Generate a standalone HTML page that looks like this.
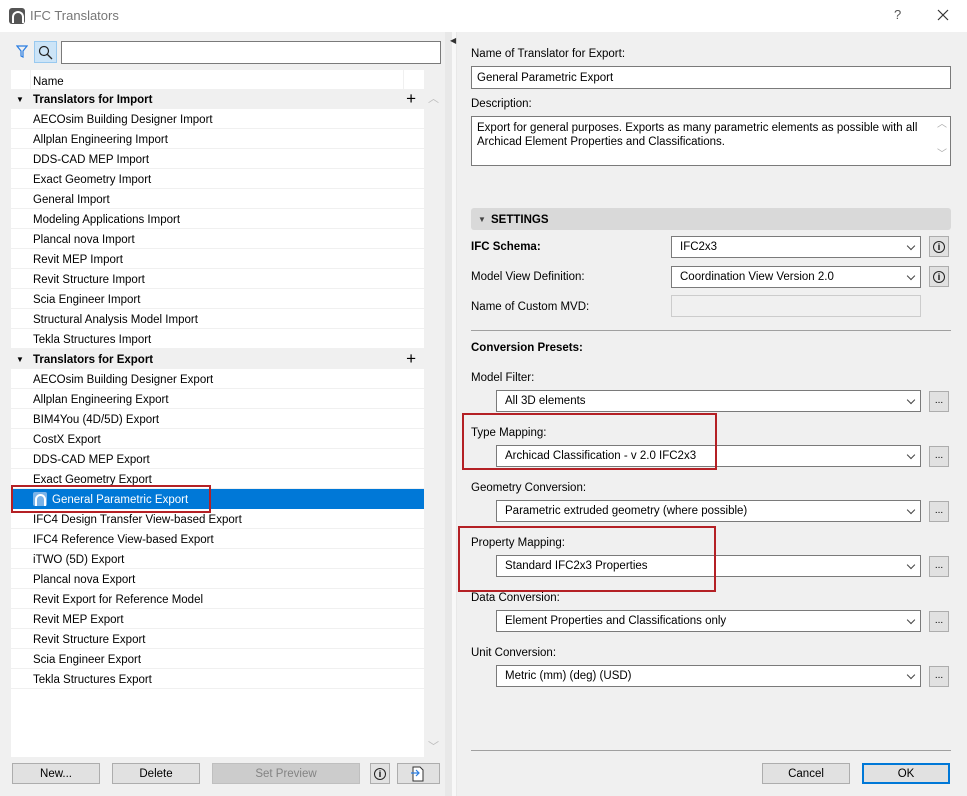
<!DOCTYPE html>
<html><head><meta charset="utf-8"><style>
*{box-sizing:border-box;margin:0;padding:0}
body{width:967px;height:796px;background:#f0f0f0;font-family:"Liberation Sans",sans-serif;font-size:11.5px;color:#000;position:relative;overflow:hidden}
.a{position:absolute}
.t{position:absolute;white-space:nowrap;line-height:14px}
.b{font-weight:bold}
.inp{position:absolute;background:#fff;border:1px solid #7a7a7a}
.sel{position:absolute;background:#fff;border:1px solid #7a7a7a;padding-left:8px;line-height:21px}
.sel:after{content:"";position:absolute;right:6px;top:6px;width:5px;height:5px;border-right:1px solid #444;border-bottom:1px solid #444;transform:rotate(45deg)}
.btn{position:absolute;background:#e1e1e1;border:1px solid #adadad;text-align:center;line-height:21px}
.dots{position:absolute;width:20px;height:21px;background:#e1e1e1;border:1px solid #adadad;text-align:center;line-height:18px;font-size:10px}
.info{position:absolute;width:20px;height:21px;background:#e1e1e1;border:1px solid #adadad}
.info i{position:absolute;left:3px;top:4px;width:12px;height:12px;border:1.3px solid #222;border-radius:50%;font-style:normal;font-size:9px;line-height:10px;text-align:center;font-weight:bold}
.row{position:absolute;left:11px;width:413px;height:20px;border-bottom:1px solid #f0f0f0;padding-left:22px;line-height:22px;background:#fff}
.grp{background:#f0f0f0;font-weight:bold}
.red{position:absolute;border:2px solid #b42025}
</style></head><body>
<div class="a" style="left:0;top:0;width:967px;height:32px;background:#fff"></div>
<div class="a" style="left:9px;top:8px;width:16px;height:16px;background:#555;border-radius:3px"></div>
<div class="a" style="left:12px;top:11px;width:12px;height:12px;border:2px solid #fff;border-radius:10px 10px 0 0;border-bottom:none"></div>
<div class="t" style="left:30px;top:9px;font-size:13px;color:#777">IFC Translators</div>
<div class="t" style="left:894px;top:8px;font-size:13px;color:#555">?</div>
<svg class="a" style="left:937px;top:9px" width="12" height="12"><path d="M1 1L11 11M11 1L1 11" stroke="#333" stroke-width="1.2"/></svg>

<!-- left -->
<svg class="a" style="left:16px;top:45px" width="12" height="13"><path d="M1 1H11L7 6V12L5 11V6Z" fill="none" stroke="#2a7de1" stroke-width="1.2"/></svg>
<div class="a" style="left:34px;top:41px;width:23px;height:22px;background:#cce4f7;border:1px solid #99c9ef"></div>
<svg class="a" style="left:38px;top:45px" width="15" height="15"><circle cx="6" cy="6" r="4.5" fill="none" stroke="#222" stroke-width="1.2"/><path d="M9.5 9.5L14 14" stroke="#222" stroke-width="1.3"/></svg>
<div class="inp" style="left:61px;top:41px;width:380px;height:23px"></div>
<div class="a" style="left:11px;top:70px;width:413px;height:687px;background:#fff"></div>
<div class="t" style="left:33px;top:75px">Name</div>
<div class="a" style="left:30px;top:70px;width:1px;height:19px;background:#f0f0f0"></div>
<div class="a" style="left:403px;top:70px;width:1px;height:19px;background:#f0f0f0"></div>
<div class="t" style="left:428px;top:92px;color:#bbb;font-size:11px">︿</div>
<div class="t" style="left:428px;top:740px;color:#bbb;font-size:11px">﹀</div>

<div class="row grp" style="top:89px">Translators for Import<span style="position:absolute;left:5px;top:0;font-size:8px">▼</span><span style="position:absolute;right:8px;top:-1px;font-size:17px;font-weight:normal">+</span></div>
<div class="row" style="top:109px">AECOsim Building Designer Import</div>
<div class="row" style="top:129px">Allplan Engineering Import</div>
<div class="row" style="top:149px">DDS-CAD MEP Import</div>
<div class="row" style="top:169px">Exact Geometry Import</div>
<div class="row" style="top:189px">General Import</div>
<div class="row" style="top:209px">Modeling Applications Import</div>
<div class="row" style="top:229px">Plancal nova Import</div>
<div class="row" style="top:249px">Revit MEP Import</div>
<div class="row" style="top:269px">Revit Structure Import</div>
<div class="row" style="top:289px">Scia Engineer Import</div>
<div class="row" style="top:309px">Structural Analysis Model Import</div>
<div class="row" style="top:329px">Tekla Structures Import</div>
<div class="row grp" style="top:349px">Translators for Export<span style="position:absolute;left:5px;top:0;font-size:8px">▼</span><span style="position:absolute;right:8px;top:-1px;font-size:17px;font-weight:normal">+</span></div>
<div class="row" style="top:369px">AECOsim Building Designer Export</div>
<div class="row" style="top:389px">Allplan Engineering Export</div>
<div class="row" style="top:409px">BIM4You (4D/5D) Export</div>
<div class="row" style="top:429px">CostX Export</div>
<div class="row" style="top:449px">DDS-CAD MEP Export</div>
<div class="row" style="top:469px">Exact Geometry Export</div>
<div class="row" style="top:489px;background:#0078d7;color:#fff;padding-left:41px;border-bottom-color:#0078d7">General Parametric Export</div>
<div class="a" style="left:33px;top:492px;width:14px;height:14px;background:#7ab3e8;border-radius:2px"></div>
<div class="a" style="left:35px;top:494px;width:11px;height:12px;border:2px solid #fff;border-bottom:none;border-radius:9px 9px 0 0"></div>
<div class="row" style="top:509px">IFC4 Design Transfer View-based Export</div>
<div class="row" style="top:529px">IFC4 Reference View-based Export</div>
<div class="row" style="top:549px">iTWO (5D) Export</div>
<div class="row" style="top:569px">Plancal nova Export</div>
<div class="row" style="top:589px">Revit Export for Reference Model</div>
<div class="row" style="top:609px">Revit MEP Export</div>
<div class="row" style="top:629px">Revit Structure Export</div>
<div class="row" style="top:649px">Scia Engineer Export</div>
<div class="row" style="top:669px">Tekla Structures Export</div>
<div class="red" style="left:11px;top:485px;width:200px;height:28px"></div>

<div class="btn" style="left:12px;top:763px;width:88px;height:21px">New...</div>
<div class="btn" style="left:112px;top:763px;width:88px;height:21px">Delete</div>
<div class="btn" style="left:212px;top:763px;width:148px;height:21px;background:#ccc;border-color:#bfbfbf;color:#838383">Set Preview</div>
<div class="info" style="left:370px;top:763px"><i>i</i></div>
<div class="btn" style="left:397px;top:763px;width:43px;height:21px"></div>
<svg class="a" style="left:410px;top:765px" width="16" height="18"><path d="M3 2H10L13 5V16H3Z" fill="#fff" stroke="#333"/><path d="M1 8H9M6 5L9 8L6 11" fill="none" stroke="#2a7de1" stroke-width="1.2"/></svg>

<!-- divider -->
<div class="a" style="left:445px;top:32px;width:12px;height:764px;background:#e8e8e8"></div>
<div class="a" style="left:452px;top:32px;width:4px;height:764px;background:#f8f8f8"></div>
<div class="t" style="left:450px;top:34px;font-size:8px;color:#333">◀</div>

<!-- right -->
<div class="t" style="left:471px;top:47px">Name of Translator for Export:</div>
<div class="inp" style="left:471px;top:66px;width:480px;height:23px;padding:5px 5px;line-height:13px">General Parametric Export</div>
<div class="t" style="left:471px;top:97px">Description:</div>
<div class="inp" style="left:471px;top:116px;width:480px;height:50px;padding:4px 5px;line-height:14px">Export for general purposes. Exports as many parametric elements as possible with all<br>Archicad Element Properties and Classifications.</div>
<div class="t" style="left:937px;top:118px;color:#aaa;font-size:10px">︿</div>
<div class="t" style="left:937px;top:148px;color:#aaa;font-size:10px">﹀</div>
<div class="a" style="left:471px;top:208px;width:480px;height:22px;background:#d9d9d9;border-radius:3px"></div>
<div class="t b" style="left:478px;top:213px;font-size:8px;color:#444">▼</div>
<div class="t b" style="left:491px;top:213px">SETTINGS</div>

<div class="t b" style="left:471px;top:240px">IFC Schema:</div>
<div class="sel" style="left:671px;top:236px;width:250px;height:22px">IFC2x3</div>
<div class="info" style="left:929px;top:236px"><i>i</i></div>
<div class="t" style="left:471px;top:270px">Model View Definition:</div>
<div class="sel" style="left:671px;top:266px;width:250px;height:22px">Coordination View Version 2.0</div>
<div class="info" style="left:929px;top:266px"><i>i</i></div>
<div class="t" style="left:471px;top:300px">Name of Custom MVD:</div>
<div class="a" style="left:671px;top:295px;width:250px;height:22px;border:1px solid #ccc;background:#f0f0f0"></div>
<div class="a" style="left:471px;top:330px;width:480px;height:1px;background:#a0a0a0"></div>
<div class="t b" style="left:471px;top:341px">Conversion Presets:</div>

<div class="t" style="left:471px;top:371px">Model Filter:</div>
<div class="sel" style="left:496px;top:390px;width:425px;height:22px">All 3D elements</div>
<div class="dots" style="left:929px;top:391px">...</div>
<div class="t" style="left:471px;top:426px">Type Mapping:</div>
<div class="sel" style="left:496px;top:445px;width:425px;height:22px">Archicad Classification - v 2.0 IFC2x3</div>
<div class="dots" style="left:929px;top:446px">...</div>
<div class="t" style="left:471px;top:481px">Geometry Conversion:</div>
<div class="sel" style="left:496px;top:500px;width:425px;height:22px">Parametric extruded geometry (where possible)</div>
<div class="dots" style="left:929px;top:501px">...</div>
<div class="t" style="left:471px;top:536px">Property Mapping:</div>
<div class="sel" style="left:496px;top:555px;width:425px;height:22px">Standard IFC2x3 Properties</div>
<div class="dots" style="left:929px;top:556px">...</div>
<div class="t" style="left:471px;top:591px">Data Conversion:</div>
<div class="sel" style="left:496px;top:610px;width:425px;height:22px">Element Properties and Classifications only</div>
<div class="dots" style="left:929px;top:611px">...</div>
<div class="t" style="left:471px;top:646px">Unit Conversion:</div>
<div class="sel" style="left:496px;top:665px;width:425px;height:22px">Metric (mm) (deg) (USD)</div>
<div class="dots" style="left:929px;top:666px">...</div>

<div class="red" style="left:462px;top:413px;width:255px;height:57px"></div>
<div class="red" style="left:458px;top:526px;width:258px;height:66px"></div>

<div class="a" style="left:471px;top:750px;width:480px;height:1px;background:#a0a0a0"></div>
<div class="btn" style="left:762px;top:763px;width:88px;height:21px">Cancel</div>
<div class="btn" style="left:862px;top:763px;width:88px;height:21px;border:2px solid #0078d7;line-height:19px">OK</div>
</body></html>
